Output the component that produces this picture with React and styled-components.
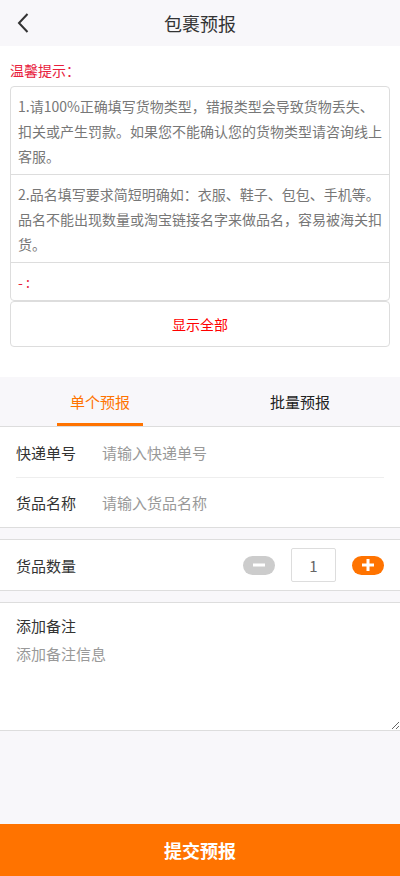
import React, { useState } from "react";
import styled, { createGlobalStyle } from "styled-components";

const GlobalStyle = createGlobalStyle`
  html, body {
    margin: 0;
    padding: 0;
    background: #f8f7fa;
  }
  * {
    box-sizing: border-box;
  }
  body {
    font-family: "Noto Sans CJK SC", "Noto Sans", "Liberation Sans", sans-serif;
  }
`;

const Page = styled.div`
  min-height: 100vh;
  display: flex;
  flex-direction: column;
  background: #f8f7fa;
`;

const Header = styled.header`
  height: 46px;
  display: flex;
  align-items: center;
  justify-content: center;
  position: relative;
  background: #f8f7fa;
`;

const BackButton = styled.button`
  position: absolute;
  left: 12px;
  top: 11px;
  width: 22px;
  height: 24px;
  padding: 0;
  border: 0;
  background: none;
  display: flex;
  align-items: center;
  justify-content: center;
`;

const Title = styled.h1`
  margin: 0;
  font-size: 18px;
  font-weight: 400;
  color: #333;
`;

const NoticeSection = styled.section`
  background: #fff;
  padding: 12px 10px 30px;
`;

const NoticeTitle = styled.div`
  font-size: 14px;
  line-height: 24px;
  color: #e8203c;
  margin-bottom: 4px;
`;

const TipList = styled.ul`
  list-style: none;
  margin: 0;
  padding: 0;
  border: 1px solid #ddd;
  border-radius: 4px;
`;

const TipItem = styled.li`
  padding: 7px 6px 5px 7px;
  font-size: 14px;
  line-height: 25px;
  color: ${props => (props.$warn ? "#e8203c" : "#777")};
  & + & {
    border-top: 1px solid #ddd;
  }
`;

const ShowAll = styled.button`
  display: block;
  width: 100%;
  height: 46px;
  border: 1px solid #ddd;
  border-radius: 4px;
  background: #fff;
  color: #ff0000;
  font-family: inherit;
  font-size: 14px;
`;

const Tabs = styled.nav`
  display: flex;
  height: 50px;
  background: #f8f7fa;
  border-bottom: 1px solid #ddd;
`;

const Tab = styled.div`
  flex: 1;
  display: flex;
  justify-content: center;
  align-items: stretch;
`;

const TabLabel = styled.span`
  display: flex;
  align-items: center;
  padding: 3px 13px 0;
  font-size: 15px;
  color: ${props => (props.$active ? "#ff7300" : "#222")};
  border-bottom: 3px solid ${props => (props.$active ? "#ff7300" : "transparent")};
`;

const Card = styled.div`
  background: #fff;
  border-bottom: 1px solid #ddd;
  border-top: ${props => (props.$topLine ? "1px solid #ddd" : "0")};
  margin-bottom: ${props => props.$gap || 0}px;
`;

const Row = styled.div`
  height: 50px;
  margin: 0 16px;
  display: flex;
  align-items: center;
  & + & {
    border-top: 1px solid #eee;
  }
`;

const Label = styled.label`
  width: 86px;
  flex-shrink: 0;
  font-size: 15px;
  color: #333;
`;

const TextInput = styled.input`
  flex: 1;
  min-width: 0;
  border: 0;
  outline: none;
  padding: 0;
  font-family: inherit;
  font-size: 15px;
  color: #333;
  background: transparent;
  &::placeholder {
    color: #999;
  }
`;

const Stepper = styled.div`
  margin-left: auto;
  display: flex;
  align-items: center;
  gap: 16px;
`;

const StepButton = styled.button`
  width: 32px;
  height: 19px;
  border: 0;
  border-radius: 10px;
  padding: 0;
  background: ${props => (props.$plus ? "#ff7300" : "#ccc")};
  display: flex;
  align-items: center;
  justify-content: center;
`;

const CountBox = styled.input`
  width: 45px;
  height: 34px;
  border: 1px solid #ddd;
  border-radius: 2px;
  text-align: center;
  font-family: inherit;
  font-size: 15px;
  color: #666;
  outline: none;
`;

const NoteCard = styled.div`
  background: #fff;
  border-top: 1px solid #ddd;
  border-bottom: 1px solid #ddd;
  padding-top: 13px;
`;

const NoteTitle = styled.div`
  padding: 0 16px;
  font-size: 15px;
  line-height: 20px;
  color: #333;
`;

const NoteArea = styled.textarea`
  display: block;
  width: 100%;
  height: 94px;
  border: 0;
  outline: none;
  padding: 8px 16px 0;
  font-family: inherit;
  font-size: 15px;
  line-height: 20px;
  color: #333;
  &::placeholder {
    color: #999;
  }
`;

const Spacer = styled.div`
  flex: 1;
`;

const Submit = styled.button`
  height: 52px;
  width: 100%;
  border: 0;
  background: #ff7300;
  color: #fff;
  font-family: inherit;
  font-size: 18px;
  font-weight: 700;
`;

const tips = [
  "1.请100%正确填写货物类型，错报类型会导致货物丢失、扣关或产生罚款。如果您不能确认您的货物类型请咨询线上客服。",
  "2.品名填写要求简短明确如：衣服、鞋子、包包、手机等。品名不能出现数量或淘宝链接名字来做品名，容易被海关扣货。",
];

function App() {
  const [count, setCount] = useState(1);
  const [tab, setTab] = useState(0);

  return (
    <Page>
      <GlobalStyle />
      <Header>
        <BackButton aria-label="返回">
          <svg width="14" height="22" viewBox="0 0 14 22">
            <path d="M11.5 2 L3 11 L11.5 20" fill="none" stroke="#333" strokeWidth="2" />
          </svg>
        </BackButton>
        <Title>包裹预报</Title>
      </Header>

      <NoticeSection>
        <NoticeTitle>温馨提示：</NoticeTitle>
        <TipList>
          {tips.map(t => (
            <TipItem key={t}>{t}</TipItem>
          ))}
          <TipItem $warn>- :</TipItem>
        </TipList>
        <ShowAll>显示全部</ShowAll>
      </NoticeSection>

      <Tabs>
        {["单个预报", "批量预报"].map((name, i) => (
          <Tab key={name} onClick={() => setTab(i)}>
            <TabLabel $active={tab === i}>{name}</TabLabel>
          </Tab>
        ))}
      </Tabs>

      <Card $gap={11}>
        <Row>
          <Label>快递单号</Label>
          <TextInput placeholder="请输入快递单号" />
        </Row>
        <Row>
          <Label>货品名称</Label>
          <TextInput placeholder="请输入货品名称" />
        </Row>
      </Card>

      <Card $topLine $gap={11}>
        <Row>
          <Label>货品数量</Label>
          <Stepper>
            <StepButton onClick={() => setCount(c => Math.max(1, c - 1))}>
              <svg width="12" height="12" viewBox="0 0 12 12">
                <rect x="0" y="4.5" width="12" height="3" fill="#fff" />
              </svg>
            </StepButton>
            <CountBox value={count} onChange={e => setCount(e.target.value)} />
            <StepButton $plus onClick={() => setCount(c => Number(c) + 1)}>
              <svg width="12" height="12" viewBox="0 0 12 12">
                <rect x="0" y="4.5" width="12" height="3" fill="#fff" />
                <rect x="4.5" y="0" width="3" height="12" fill="#fff" />
              </svg>
            </StepButton>
          </Stepper>
        </Row>
      </Card>

      <NoteCard>
        <NoteTitle>添加备注</NoteTitle>
        <NoteArea placeholder="添加备注信息" />
      </NoteCard>

      <Spacer />
      <Submit>提交预报</Submit>
    </Page>
  );
}

export default App;
